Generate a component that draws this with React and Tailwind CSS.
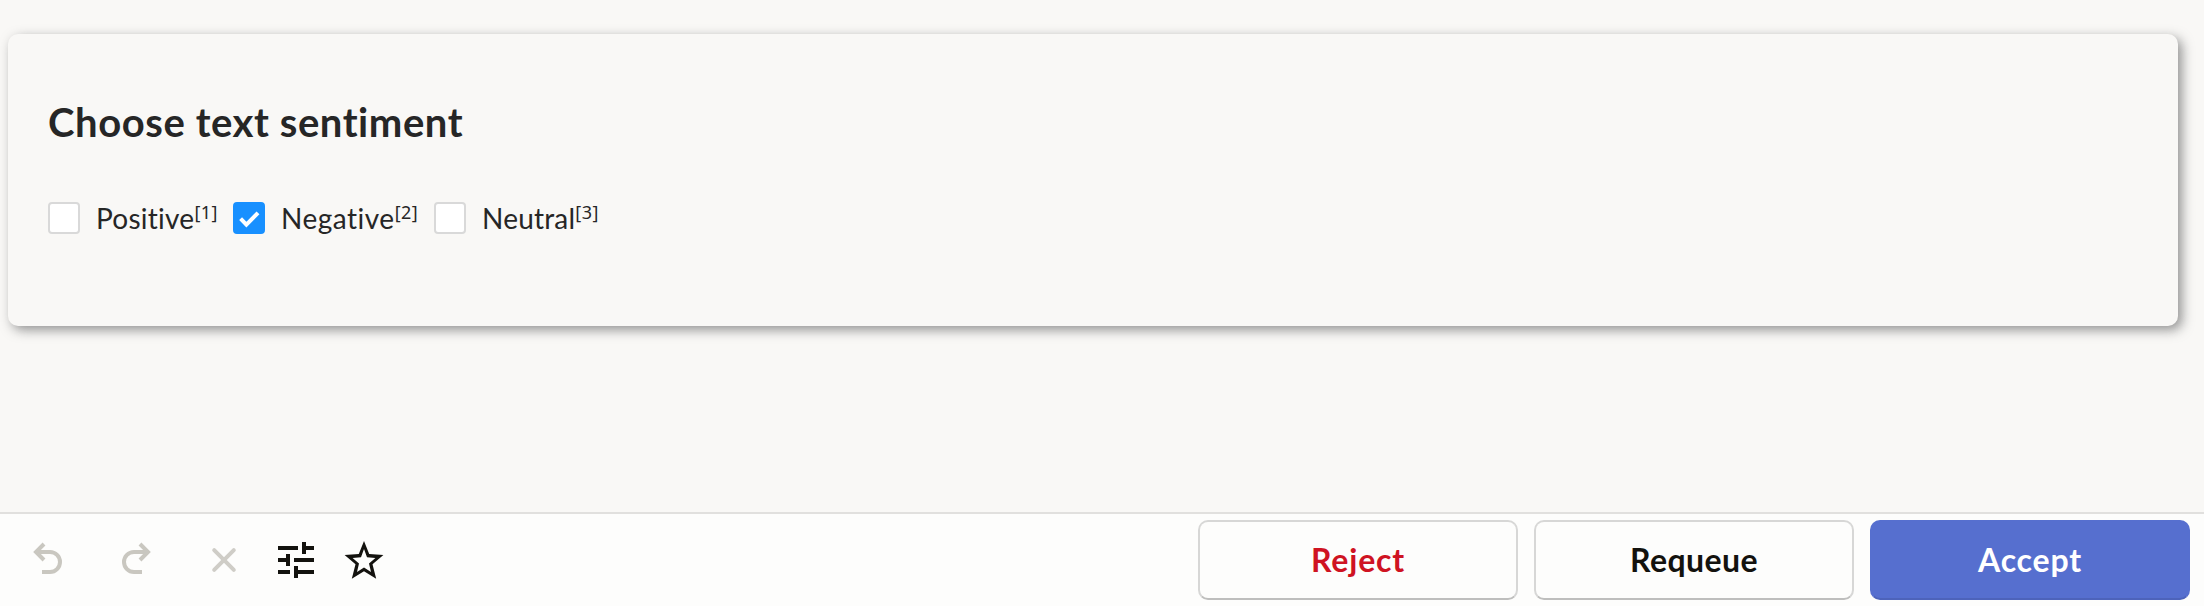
import React from "react";

const choices = [
  { label: "Positive", key: "[1]", checked: false, box: "w-[185px]", text: "tracking-[0.25px]" },
  { label: "Negative", key: "[2]", checked: true, box: "w-[201px]", text: "tracking-[0.5px]" },
  { label: "Neutral", key: "[3]", checked: false, box: "w-[185px]", text: "tracking-[0.2px]" },
];

function Choice({ label, hotkey, checked, box, text }) {
  return (
    <label className={"flex h-8 items-center " + box}>
      <span
        className={
          "flex size-8 shrink-0 items-center justify-center rounded-[4px] border-2 " +
          (checked ? "border-[#1890ff] bg-[#1890ff]" : "border-[#d9d9d9] bg-white")
        }
      >
        {checked && (
          <svg width="28" height="28" viewBox="0 0 28 28" className="shrink-0">
            <path d="M5.6 14.6 L11.4 20.6 L23 8.8" fill="none" stroke="#fff" strokeWidth="4" />
          </svg>
        )}
      </span>
      <span className={"ml-4 whitespace-nowrap text-[28px] leading-8 [font-variant-ligatures:none] " + text}>{label}</span>
      <span className="-mt-3 whitespace-nowrap font-['Noto_Sans',sans-serif] text-[18px] leading-5 tracking-[0.5px]">{hotkey}</span>
    </label>
  );
}

function Toolbar() {
  return (
    <div className="flex h-full items-center">
      <svg width="48" height="48" viewBox="0 0 48 48" className="ml-6" fill="none" stroke="#c9c7c0" strokeWidth="4">
        <path d="M18 36 H26 A10 10 0 0 0 26 16 H12" />
        <path d="M20 8 L12 16 L20 24" />
      </svg>
      <svg width="48" height="48" viewBox="0 0 48 48" className="ml-10" fill="none" stroke="#c9c7c0" strokeWidth="4">
        <path d="M30 36 H22 A10 10 0 0 1 22 16 H36" />
        <path d="M28 8 L36 16 L28 24" />
      </svg>
      <svg width="48" height="48" viewBox="0 0 48 48" className="ml-10" fill="none" stroke="#cfcdc7" strokeWidth="4" strokeLinecap="round">
        <path d="M14.2 14.2 L33.8 33.8 M33.8 14.2 L14.2 33.8" />
      </svg>
      <svg width="48" height="48" viewBox="0 0 24 24" className="ml-6" fill="#13120e">
        <path d="M3 17v2h6v-2H3zM3 5v2h10V5H3zm10 16v-2h8v-2h-8v-2h-2v6h2zM7 9v2H3v2h4v2h2V9H7zm14 4v-2H11v2h10zm-6-4h2V7h4V5h-4V3h-2v6z" />
      </svg>
      <svg width="48" height="48" viewBox="0 0 48 48" className="ml-5" fill="#13120e" fillRule="evenodd">
        <path d="M24 5 L29.2 18 L43.4 19 L32.5 28.2 L36.2 42.8 L24 35.2 L11.8 42.8 L15.5 28.2 L4.6 19 L18.8 18 Z M24 13 L21 21.2 L12.6 21.9 L19 27.5 L17 35.9 L24 31.6 L31 35.9 L29 27.5 L35.4 21.9 L27 21.2 Z" />
      </svg>
    </div>
  );
}

export default function App() {
  return (
    <div className="flex h-[606px] w-[2204px] flex-col overflow-hidden bg-[#f9f8f6] font-['Lato',sans-serif] text-[#262626]">
      <main className="flex-1 pl-2 pr-[26px] pt-[34px]">
        <section className="h-[292px] rounded-[10px] bg-[#f9f8f6] px-10 pt-[62px] shadow-[4px_4px_12px_rgba(128,128,128,0.85)]">
          <h2 className="h-[52px] whitespace-nowrap text-[40px] font-bold leading-[52px] tracking-[0.57px]">Choose text sentiment</h2>
          <div className="mt-[54px] flex">
            {choices.map((c) => (
              <Choice key={c.key} label={c.label} hotkey={c.key} checked={c.checked} box={c.box} text={c.text} />
            ))}
          </div>
        </section>
      </main>
      <footer className="flex h-[94px] shrink-0 justify-between border-t-2 border-[#e1e0de] bg-[#fdfdfc] pr-[14px]">
        <Toolbar />
        <div className="flex gap-4 pt-[6px] text-[32px] font-bold leading-[76px]">
          <button className="h-20 w-80 rounded-[10px] border-2 border-[#d7d7d6] border-b-[#bebebd] tracking-[0.8px] text-[#cf1322]">Reject</button>
          <button className="h-20 w-80 rounded-[10px] border-2 border-[#d7d7d6] border-b-[#bebebd] tracking-[0.4px] text-[#13120e]">Requeue</button>
          <button className="h-20 w-80 rounded-[10px] border-2 border-[#566fcf] border-b-[#4d63ba] bg-[#566fcf] tracking-[0.8px] text-white">Accept</button>
        </div>
      </footer>
    </div>
  );
}
